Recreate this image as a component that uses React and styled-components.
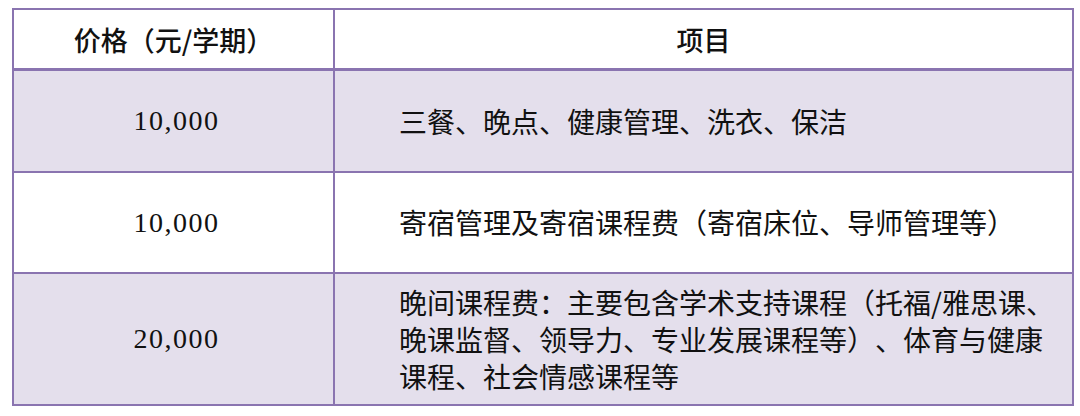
import React from "react";
import styled, { createGlobalStyle } from "styled-components";

const GlobalStyle = createGlobalStyle`
  html, body {
    margin: 0;
    padding: 0;
    background: #ffffff;
  }
`;

const Page = styled.div`
  width: 1080px;
  height: 416px;
  padding: 8px 0 0 12px;
  box-sizing: border-box;
  background: #ffffff;
`;

const Table = styled.table`
  width: 1062px;
  border-collapse: collapse;
  table-layout: fixed;
  border: 2px solid #8a74b0;
  font-family: "Noto Sans CJK SC", "Noto Sans", sans-serif;
  color: #111111;
  text-spacing-trim: space-all;
`;

const HeadCell = styled.th`
  height: 58px;
  padding: 0;
  border-left: 2px solid #8a74b0;
  border-right: 2px solid #8a74b0;
  border-bottom: 3px solid #8a74b0;
  font-size: 27px;
  font-weight: 500;
  text-align: center;
  vertical-align: middle;
  background: #ffffff;
`;

const Row = styled.tr`
  background: ${(p) => (p.$shaded ? "#e4dfec" : "#ffffff")};
`;

const PriceCell = styled.td`
  height: ${(p) => p.$h}px;
  padding: 0 0 0 6px;
  border: 2px solid #8a74b0;
  border-top-width: ${(p) => (p.$first ? 0 : 2)}px;
  text-align: center;
  vertical-align: middle;
  font-family: "Liberation Serif", "Noto Sans CJK SC", serif;
  font-size: 28px;
  letter-spacing: 1.5px;
`;

const ItemCell = styled.td`
  padding: 0 8px 0 64px;
  border: 2px solid #8a74b0;
  border-top-width: ${(p) => (p.$first ? 0 : 2)}px;
  text-align: left;
  vertical-align: middle;
  font-size: 28px;
  line-height: 37px;
  font-weight: 400;
`;

const rows = [
  { price: "10,000", item: "三餐、晚点、健康管理、洗衣、保洁", h: 100, shaded: true },
  { price: "10,000", item: "寄宿管理及寄宿课程费（寄宿床位、导师管理等）", h: 99, shaded: false },
  {
    price: "20,000",
    item: "晚间课程费：主要包含学术支持课程（托福/雅思课、晚课监督、领导力、专业发展课程等）、体育与健康课程、社会情感课程等",
    h: 130,
    shaded: true,
  },
];

const App = () => {
  return (
    <Page>
      <GlobalStyle />
      <Table>
        <colgroup>
          <col style={{ width: "321px" }} />
          <col />
        </colgroup>
        <thead>
          <tr>
            <HeadCell>价格（元/学期）</HeadCell>
            <HeadCell>项目</HeadCell>
          </tr>
        </thead>
        <tbody>
          {rows.map((r, i) => (
            <Row key={i} $shaded={r.shaded}>
              <PriceCell $h={r.h} $first={i === 0}>{r.price}</PriceCell>
              <ItemCell $first={i === 0}>{r.item}</ItemCell>
            </Row>
          ))}
        </tbody>
      </Table>
    </Page>
  );
};

export default App;
